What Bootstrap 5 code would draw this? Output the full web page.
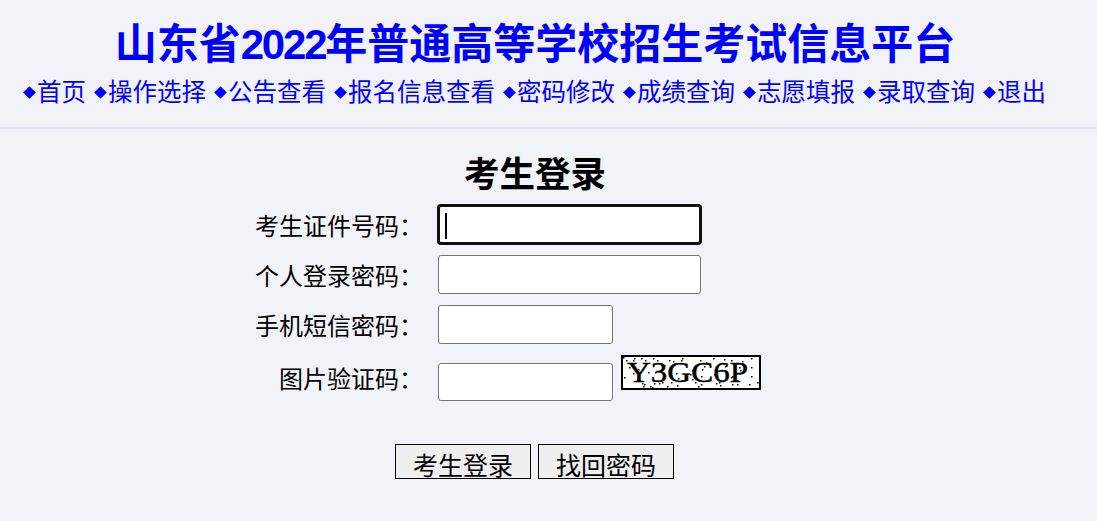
<!DOCTYPE html>
<html>

<head>
  <meta charset="utf-8">
  <meta name="viewport" content="width=device-width">
  <title>考生登录</title>
  <link href="https://cdn.jsdelivr.net/npm/bootstrap@5.3.2/dist/css/bootstrap.min.css" rel="stylesheet">
  <style>
    body {
      background: #f2f3f9;
      color: #000;
      font-family: "Liberation Sans", "Noto Sans CJK SC", sans-serif;
    }

    .site-head {
      height: 129px;
      padding-top: 17px;
      border-bottom: 2px solid #ddddff;
      color: #0000ff;
    }

    .site-title {
      font-size: 42px;
      line-height: 56px;
      font-weight: 700;
      margin: 0 0 0 -27px;
    }

    .title-num {
      letter-spacing: -2.2px;
    }

    .site-menu {
      font-size: 24.5px;
      line-height: 32px;
      margin: 4px 0 0 -36px;
      white-space: nowrap;
    }

    .site-menu a {
      color: #0000ff;
      text-decoration: none;
    }

    .menu-dot {
      width: 9px;
      height: 9px;
      background: #0000ff;
      transform: rotate(45deg);
      display: inline-block;
      margin: 0 3px 5px 10px;
      vertical-align: middle;
    }

    .login-title {
      font-size: 35.5px;
      line-height: 48px;
      font-weight: 700;
      margin: 22px 0 6px -27px;
    }

    .login-row {
      font-size: 24px;
      line-height: 32px;
    }

    .login-row+.login-row {
      margin-top: 11px;
    }

    .login-row.captcha-row {
      margin-top: 19px;
    }

    .login-label {
      width: 423px;
      text-align: right;
      margin: 4px 15px 0 0;
    }

    .captcha-row .login-label {
      margin: 0 15px 4px 0;
    }

    .input-wrap {
      display: flex;
    }

    .login-input {
      width: 263px;
      height: 39px;
      border: 1px solid #767676;
      border-radius: 3px;
      background: #fff;
      padding: 1px 6px;
    }

    .login-input.short-input {
      width: 175px;
    }

    .captcha-row .login-input {
      height: 38px;
    }

    .login-input:focus {
      outline: 3px solid #101010;
      outline-offset: -2px;
      caret-color: transparent;
    }

    .fake-caret {
      left: 7px;
      top: 8px;
      width: 2px;
      height: 26px;
      background: #000;
    }

    .captcha-box {
      width: 140px;
      height: 35px;
      margin-left: 8px;
      margin-top: -8px;
      align-self: flex-start;
      border: 2px solid #000;
      background: #fff;
      display: block;
    }

    .captcha-box text {
      font-family: "Liberation Serif", serif;
      font-size: 30px;
      stroke: #000;
      stroke-width: .5px;
    }

    .login-btns {
      margin: 43px 0 0 -28px;
      gap: 7px;
    }

    .login-btn {
      width: 136px;
      height: 35px;
      padding: 9px 0 0;
      border: 1px solid #000;
      border-radius: 0;
      background: #efefef;
      color: #000;
      font-size: 25px;
      line-height: 24px;
      overflow: hidden;
    }
  </style>
  <script src="https://cdn.jsdelivr.net/npm/bootstrap@5.3.2/dist/js/bootstrap.bundle.min.js"></script>
</head>

<body>
  <header class="site-head text-center">
    <h1 class="site-title">山东省<span class="title-num">2022</span>年普通高等学校招生考试信息平台</h1>
    <nav class="site-menu d-flex justify-content-center" id="siteMenu"></nav>
  </header>
  <main>
    <h2 class="login-title text-center">考生登录</h2>
    <form>
      <div class="login-row d-flex align-items-center">
        <label class="login-label" for="inputId">考生证件号码：</label>
        <div class="input-wrap position-relative">
          <input class="login-input" id="inputId" type="text" autofocus>
          <span class="fake-caret position-absolute"></span>
        </div>
      </div>
      <div class="login-row d-flex align-items-center">
        <label class="login-label" for="inputPwd">个人登录密码：</label>
        <input class="login-input" id="inputPwd" type="password">
      </div>
      <div class="login-row d-flex align-items-center">
        <label class="login-label" for="inputSms">手机短信密码：</label>
        <input class="login-input short-input" id="inputSms" type="text">
      </div>
      <div class="login-row captcha-row d-flex align-items-center">
        <label class="login-label" for="inputCode">图片验证码：</label>
        <input class="login-input short-input" id="inputCode" type="text">
        <svg class="captcha-box" viewBox="0 0 136 31" id="captcha">
          <text x="4" y="25" textLength="121" lengthAdjust="spacingAndGlyphs">Y3GC6P</text>
        </svg>
      </div>
      <div class="d-flex justify-content-center login-btns">
        <button class="login-btn" type="button">考生登录</button>
        <button class="login-btn" type="button">找回密码</button>
      </div>
    </form>
  </main>
  <script>
    const menuItems = ["首页", "操作选择", "公告查看", "报名信息查看", "密码修改", "成绩查询", "志愿填报", "录取查询", "退出"]
    const siteMenu = document.querySelector("#siteMenu")

    menuItems.forEach(function (item) {
      const a = document.createElement('a')
      a.href = "#"
      a.innerHTML = `<span class="menu-dot"></span>${item}`
      siteMenu.appendChild(a)
    })

    // speckle on the captcha
    const captcha = document.querySelector("#captcha")
    let seed = 7
    for (let i = 0; i < 70; i++) {
      seed = (seed * 137 + 41) % 1009
      const dot = document.createElementNS("http://www.w3.org/2000/svg", "rect")
      dot.setAttribute("x", seed % 136)
      dot.setAttribute("y", (seed * 7) % 31)
      dot.setAttribute("width", 1.5)
      dot.setAttribute("height", 1.5)
      captcha.appendChild(dot)
    }
  </script>
</body>

</html>
